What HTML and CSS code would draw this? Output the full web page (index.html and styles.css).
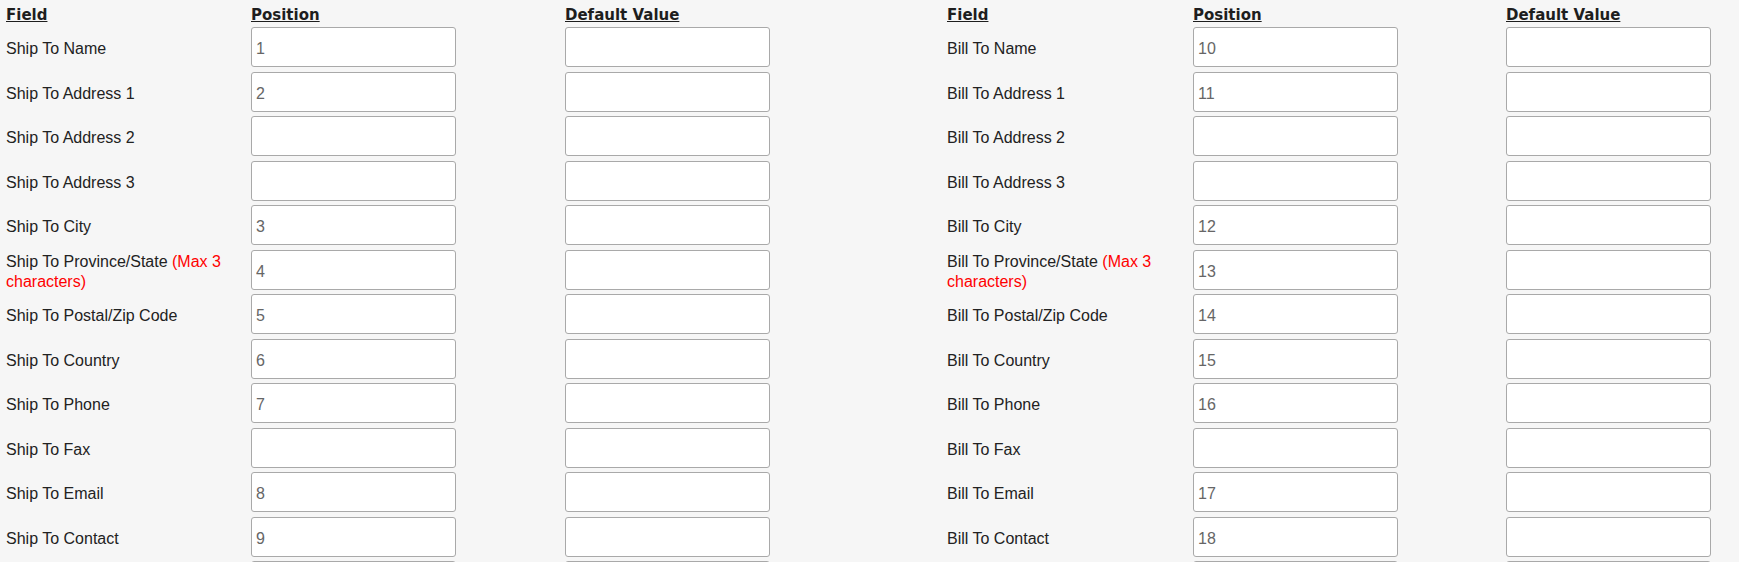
FILE: index.html
```html
<!DOCTYPE html>
<html lang="en">
<head>
<meta charset="UTF-8" />
<title>Field Mapping</title>
<link rel="stylesheet" href="styles.css">
</head>
<body>

<div class="mapping">
  <!-- Ship to -->
  <div class="map-table">
    <div class="th">Field</div><div class="th">Position</div><div class="th">Default Value</div>

    <div class="field">Ship To Name</div><div><input value="1" /></div><div><input /></div>
    <div class="field">Ship To Address 1</div><div><input value="2" /></div><div><input /></div>
    <div class="field">Ship To Address 2</div><div><input /></div><div><input /></div>
    <div class="field">Ship To Address 3</div><div><input /></div><div><input /></div>
    <div class="field">Ship To City</div><div><input value="3" /></div><div><input /></div>
    <div class="field">Ship To Province/State <span class="req">(Max 3 characters)</span></div><div><input value="4" /></div><div><input /></div>
    <div class="field">Ship To Postal/Zip Code</div><div><input value="5" /></div><div><input /></div>
    <div class="field">Ship To Country</div><div><input value="6" /></div><div><input /></div>
    <div class="field">Ship To Phone</div><div><input value="7" /></div><div><input /></div>
    <div class="field">Ship To Fax</div><div><input /></div><div><input /></div>
    <div class="field">Ship To Email</div><div><input value="8" /></div><div><input /></div>
    <div class="field">Ship To Contact</div><div><input value="9" /></div><div><input /></div>
    <div class="field"></div><div><input /></div><div><input /></div>
  </div>

  <!-- Bill to -->
  <div class="map-table right">
    <div class="th">Field</div><div class="th">Position</div><div class="th">Default Value</div>

    <div class="field">Bill To Name</div><div><input value="10" /></div><div><input /></div>
    <div class="field">Bill To Address 1</div><div><input value="11" /></div><div><input /></div>
    <div class="field">Bill To Address 2</div><div><input /></div><div><input /></div>
    <div class="field">Bill To Address 3</div><div><input /></div><div><input /></div>
    <div class="field">Bill To City</div><div><input value="12" /></div><div><input /></div>
    <div class="field">Bill To Province/State <span class="req">(Max 3 characters)</span></div><div><input value="13" /></div><div><input /></div>
    <div class="field">Bill To Postal/Zip Code</div><div><input value="14" /></div><div><input /></div>
    <div class="field">Bill To Country</div><div><input value="15" /></div><div><input /></div>
    <div class="field">Bill To Phone</div><div><input value="16" /></div><div><input /></div>
    <div class="field">Bill To Fax</div><div><input /></div><div><input /></div>
    <div class="field">Bill To Email</div><div><input value="17" /></div><div><input /></div>
    <div class="field">Bill To Contact</div><div><input value="18" /></div><div><input /></div>
    <div class="field"></div><div><input /></div><div><input /></div>
  </div>
</div>

</body>
</html>
```

FILE: styles.css
```css
body {
  margin: 0;
  background: #f6f6f6;
  font-family: "Liberation Sans", Arial, sans-serif;
  font-size: 16px;
  color: #222;
}
.mapping {
  display: flex;
  padding-left: 6px;
}
.map-table {
  display: grid;
  grid-template-columns: 245px 314px 382px;
  grid-template-rows: 25px;
  grid-auto-rows: 44.5px;
  align-items: center;
}
.map-table.right {
  grid-template-columns: 246px 313px 1fr;
  flex: 1;
}
.th {
  align-self: end;
  font-family: "DejaVu Sans", Verdana, sans-serif;
  font-weight: bold;
  font-size: 15px;
  line-height: 20px;
  text-decoration: underline;
  color: #1e1e1e;
}
.field {
  line-height: 20px;
  padding: 4px 8px 0 0;
}
.req {
  color: #f00;
}
input {
  display: block;
  box-sizing: border-box;
  width: 205px;
  height: 40px;
  margin: 0;
  padding: 4px 4px 0;
  border: 1px solid #a9a9a9;
  border-radius: 3px;
  background: #fff;
  font-family: "Liberation Sans", Arial, sans-serif;
  font-size: 16px;
  color: #666;
}
```
